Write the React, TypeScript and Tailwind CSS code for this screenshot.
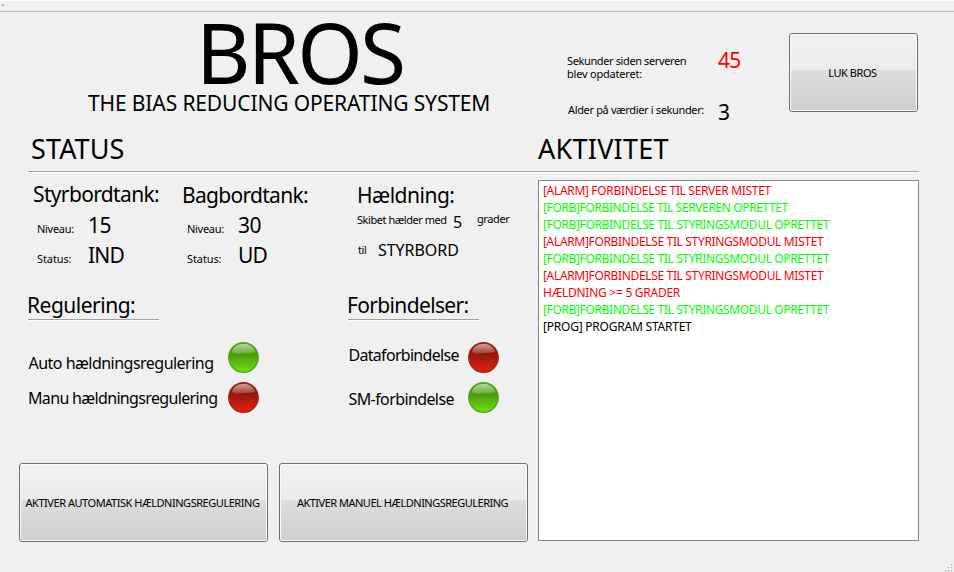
import { clsx } from "clsx";

type Tone = "alarm" | "ok" | "plain";

const LOG: { tone: Tone; text: string; spacing: string }[] = [
  { tone: "alarm", text: "[ALARM] FORBINDELSE TIL SERVER MISTET", spacing: "tracking-[-0.33px]" },
  { tone: "ok", text: "[FORB]FORBINDELSE TIL SERVEREN OPRETTET", spacing: "tracking-[-0.38px]" },
  { tone: "ok", text: "[FORB]FORBINDELSE TIL STYRINGSMODUL OPRETTET", spacing: "tracking-[-0.36px]" },
  { tone: "alarm", text: "[ALARM]FORBINDELSE TIL STYRINGSMODUL MISTET", spacing: "tracking-[-0.34px]" },
  { tone: "ok", text: "[FORB]FORBINDELSE TIL STYRINGSMODUL OPRETTET", spacing: "tracking-[-0.36px]" },
  { tone: "alarm", text: "[ALARM]FORBINDELSE TIL STYRINGSMODUL MISTET", spacing: "tracking-[-0.34px]" },
  { tone: "alarm", text: "HÆLDNING >= 5 GRADER", spacing: "tracking-[-0.26px]" },
  { tone: "ok", text: "[FORB]FORBINDELSE TIL STYRINGSMODUL OPRETTET", spacing: "tracking-[-0.36px]" },
  { tone: "plain", text: "[PROG] PROGRAM STARTET", spacing: "tracking-[-0.22px]" },
];

const TONE_CLASS: Record<Tone, string> = {
  alarm: "text-[#ff0000]",
  ok: "text-[#00ff00]",
  plain: "text-black",
};

const SMALL = "text-[11px] leading-[13px]";
const MEDIUM = "text-[16px] leading-[20px]";
const LARGE = "text-[21px] leading-[26px]";
const HEADING = "text-[27px] leading-[33px]";

function Rule({ className }: { className?: string }) {
  return <div className={clsx("h-[2px] border-t border-[#a0a0a0] bg-white", className)} />;
}

function PushButton({ label, className }: { label: string; className: string }) {
  return (
    <button
      className={clsx(
        "h-[79px] shrink-0 rounded-[3px] border border-[#707070] bg-[#fafafa] p-px",
        className,
      )}
    >
      <span className="flex h-full w-full items-center justify-center rounded-[1px] bg-[linear-gradient(to_bottom,#f2f2f2_0%,#ebebeb_47%,#dddddd_47%,#cfcfcf_100%)] pr-[2px] text-[11px] leading-[13px] whitespace-nowrap">
        {label}
      </span>
    </button>
  );
}

function Lamp({ color }: { color: "green" | "red" }) {
  const green = color === "green";
  return (
    <svg width="31" height="31" viewBox="0 0 31 31" className="block shrink-0">
      <defs>
        <linearGradient id={`body-${color}`} x1="0" y1="0" x2="0" y2="1">
          <stop offset="0" stopColor={green ? "#4b9a10" : "#8a140a"} />
          <stop offset="0.4" stopColor={green ? "#4b9c0e" : "#98170b"} />
          <stop offset="1" stopColor={green ? "#6ce010" : "#e4200f"} />
        </linearGradient>
        <linearGradient id={`gloss-${color}`} x1="0" y1="0" x2="0" y2="1">
          <stop offset="0" stopColor="#fff" stopOpacity="0.6" />
          <stop offset="1" stopColor="#fff" stopOpacity="0.16" />
        </linearGradient>
      </defs>
      <circle
        cx="15.5"
        cy="15.5"
        r="14.8"
        fill={`url(#body-${color})`}
        stroke={green ? "#4fa516" : "#9c2216"}
        strokeWidth="1.2"
      />
      <path
        d="M4 10 C5.5 4.5 10 1.8 15.5 1.8 C21 1.8 25.5 4.5 27 10 C25 11 20 10.6 15.5 11.2 C11 11.9 6 12.2 4 10 Z"
        fill={`url(#gloss-${color})`}
      />
    </svg>
  );
}

function Tank({ title, level, status, className, titleClass }: {
  title: string;
  level: string;
  status: string;
  className: string;
  titleClass: string;
}) {
  return (
    <div className={clsx("w-[150px] shrink-0", className)}>
      <div className={clsx(LARGE, titleClass)}>{title}</div>
      <div className="flex h-[26px] items-baseline pl-[9px]">
        <span className={clsx(SMALL, "w-[51px] tracking-[-0.3px]")}>Niveau:</span>
        <span className={clsx(LARGE, "tracking-[-0.5px]")}>{level}</span>
      </div>
      <div className="mt-1 flex h-[26px] items-baseline pl-[9px]">
        <span className={clsx(SMALL, "w-[51px] tracking-[-0.1px]")}>Status:</span>
        <span className={clsx(LARGE, "tracking-[-0.8px]")}>{status}</span>
      </div>
    </div>
  );
}

function ResizeGrip() {
  const dots = [[9, 1], [6, 4], [9, 4], [3, 7], [6, 7], [9, 7]];
  return (
    <svg width="11" height="8" viewBox="0 0 11 8" className="block">
      {dots.map(([x, y]) => (
        <g key={`${x}-${y}`}>
          <rect x={x - 1} y={y - 1} width="2" height="2" fill="#fff" />
          <rect x={x - 1} y={y - 1} width="1.5" height="1.5" fill="#b4b4b4" />
        </g>
      ))}
    </svg>
  );
}

export default function App() {
  return (
    <div className="flex h-[572px] w-[954px] flex-col overflow-hidden bg-[#f0f0f0] font-['Noto_Sans','DejaVu_Sans',sans-serif] whitespace-nowrap text-black">
      <div className="h-[12px] shrink-0 border-t border-b border-t-white border-b-[#b9b9b9] pt-[3px] pl-[2px]">
        <div className="h-[2px] w-[2px] bg-[#b0b0b0]" />
      </div>

      <header className="flex h-[120px] shrink-0">
        <div className="w-[567px] shrink-0 pt-[2px]">
          <h1 className="pl-[196px] text-[84px] leading-[76px] tracking-[-2.8px]">BROS</h1>
          <p className={clsx(LARGE, "pl-[88px] tracking-[-0.13px]")}>THE BIAS REDUCING OPERATING SYSTEM</p>
        </div>
        <div className="w-[151px] shrink-0 pt-[42px]">
          <p className={clsx(SMALL, "tracking-[-0.38px]")}>Sekunder siden serveren</p>
          <p className={clsx(SMALL, "tracking-[-0.2px]")}>blev opdateret:</p>
          <p className={clsx(SMALL, "mt-[23px] pl-px tracking-[-0.35px]")}>Alder på værdier i sekunder:</p>
        </div>
        <div className="w-[71px] shrink-0 pt-[35px]">
          <div className={clsx(LARGE, "tracking-[-0.8px] text-[#ff0000]")}>45</div>
          <div className={clsx(LARGE, "mt-[26px]")}>3</div>
        </div>
        <div className="pt-[21px]">
          <PushButton label="LUK BROS" className="w-[129px] tracking-[-0.45px]" />
        </div>
      </header>

      <div className="flex h-[39px] shrink-0 pl-[31px]">
        <h2 className={clsx(HEADING, "w-[507px] tracking-[0.1px]")}>STATUS</h2>
        <h2 className={clsx(HEADING, "tracking-[0.25px]")}>AKTIVITET</h2>
      </div>
      <Rule className="ml-[28px] w-[891px] shrink-0" />

      <main className="flex min-h-0 flex-1">
        <section className="w-[538px] shrink-0">
          <div className="flex h-[119px] pl-[28px]">
            <Tank
              title="Styrbordtank:"
              level="15"
              status="IND"
              className="pt-[8px]"
              titleClass="mb-[5px] pl-[5px] tracking-[-0.65px]"
            />
            <Tank
              title="Bagbordtank:"
              level="30"
              status="UD"
              className="pt-[9px]"
              titleClass="mb-[4px] pl-[4px] tracking-[-0.7px]"
            />
            <div className="pt-[9px] pl-[29px]">
              <div className={clsx(LARGE, "tracking-[-0.5px]")}>Hældning:</div>
              <div className="mt-[4px] flex h-[20px] items-start">
                <span className={clsx(SMALL, "mt-[1px] w-[96px] tracking-[-0.45px]")}>Skibet hælder med</span>
                <span className={clsx(MEDIUM, "w-[24px]")}>5</span>
                <span className={clsx(SMALL, "tracking-[-0.4px]")}>grader</span>
              </div>
              <div className="mt-[8px] flex h-[20px] items-start">
                <span className={clsx(SMALL, "mt-[3px] w-[21px] pl-px tracking-[-0.4px]")}>til</span>
                <span className={clsx(MEDIUM, "tracking-[-0.05px]")}>STYRBORD</span>
              </div>
            </div>
          </div>

          <div className="flex h-[171px] pl-[28px]">
            <div className="w-[320px] shrink-0">
              <h3 className={clsx(LARGE, "-ml-[1px] tracking-[-0.5px]")}>Regulering:</h3>
              <Rule className="mt-px w-[131px]" />
              <div className="mt-[21px] flex h-[31px]">
                <span className={clsx(MEDIUM, "mt-[11px] w-[200px] pl-[0.5px] tracking-[-0.52px]")}>
                  Auto hældningsregulering
                </span>
                <Lamp color="green" />
              </div>
              <div className="mt-[9px] flex h-[31px]">
                <span className={clsx(MEDIUM, "mt-[6px] w-[200px] tracking-[-0.66px]")}>
                  Manu hældningsregulering
                </span>
                <Lamp color="red" />
              </div>
            </div>
            <div>
              <h3 className={clsx(LARGE, "-ml-[1px] tracking-[-0.65px]")}>Forbindelser:</h3>
              <Rule className="mt-px w-[131px]" />
              <div className="mt-[21px] flex h-[31px]">
                <span className={clsx(MEDIUM, "mt-[3px] w-[120px] pl-[0.5px] tracking-[-0.7px]")}>Dataforbindelse</span>
                <Lamp color="red" />
              </div>
              <div className="mt-[9px] flex h-[31px]">
                <span className={clsx(MEDIUM, "mt-[7px] w-[120px] pl-[0.5px] tracking-[-0.6px]")}>SM-forbindelse</span>
                <Lamp color="green" />
              </div>
            </div>
          </div>

          <div className="flex gap-[11px] pl-[19px]">
            <PushButton label="AKTIVER AUTOMATISK HÆLDNINGSREGULERING" className="w-[249px] tracking-[-0.46px]" />
            <PushButton label="AKTIVER MANUEL HÆLDNINGSREGULERING" className="w-[249px] tracking-[-0.5px]" />
          </div>
        </section>

        <section className="mt-[7px] h-[361px] w-[381px] shrink-0 border border-[#828790] bg-white pt-px pl-[4px]">
          {LOG.map((entry, i) => (
            <div key={i} className={clsx("text-[12px] leading-[17px]", TONE_CLASS[entry.tone], entry.spacing)}>
              {entry.text}
            </div>
          ))}
        </section>

        <div className="flex flex-1 items-end justify-end">
          <ResizeGrip />
        </div>
      </main>
    </div>
  );
}
